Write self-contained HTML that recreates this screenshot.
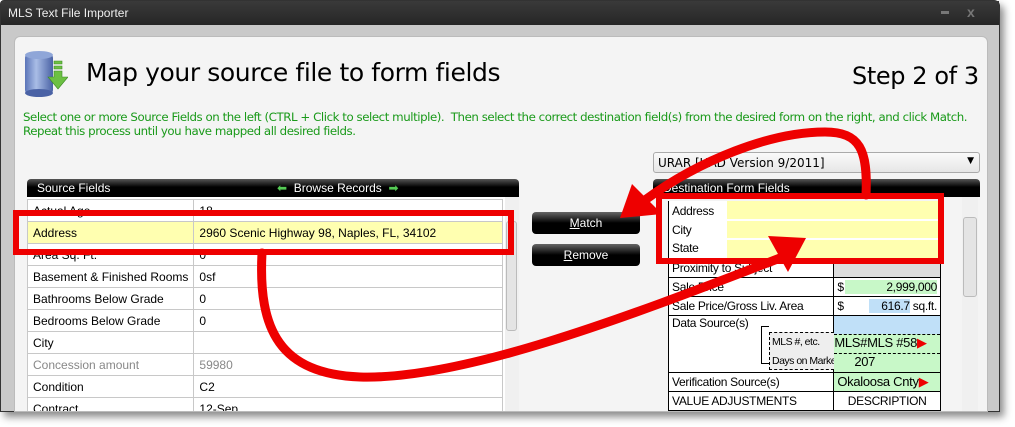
<!DOCTYPE html>
<html><head><meta charset="utf-8"><style>
*{margin:0;padding:0;box-sizing:border-box}
body{width:1015px;height:427px;background:#fff;position:relative;overflow:hidden;font-family:"Liberation Sans",sans-serif}
.win{position:absolute;left:0;top:0;width:1000px;height:412px;background:#c9c9c9;border:1px solid #333;box-shadow:4px 5px 8px rgba(0,0,0,.45);border-radius:4px 6px 0 0}
.title{position:absolute;left:0;top:0;width:998px;height:24px;background:linear-gradient(#3a3a3a,#262626);color:#eee;font-size:12px;padding:5px 7px}
.panel{position:absolute;left:13px;top:35px;width:974px;height:376px;background:#f4f4f4;border-radius:6px 6px 0 0;border:1px solid #bbb}
.abs{position:absolute}
.hdr{background:linear-gradient(#555,#000 45%);color:#fff;font-size:12px;height:18px;border-radius:4px 4px 0 0;padding:2px 10px}
table{border-collapse:collapse}
.src td{height:22px;border:1px solid #c8c8c8;font-size:12px;padding:0 5px;background:#fff;white-space:nowrap}
.btn{position:absolute;left:532px;width:108px;height:22px;border-radius:4px;background:linear-gradient(#666,#000 50%);color:#fff;font-size:12px;text-align:center;line-height:22px}
.f td{border:1px solid #000;height:19px;padding:0 3px;font-size:12px;white-space:nowrap;letter-spacing:-.3px}
</style></head><body>
<div class="win">
<div class="title">MLS Text File Importer</div>
<div class="abs" style="left:940px;top:10px;width:8px;height:3px;background:#777"></div>
<div class="abs" style="left:966px;top:3px;color:#777;font-size:14px;font-weight:bold">x</div>
<div class="panel"></div>
</div>
<svg class="abs" style="left:24px;top:50px" width="44" height="48"><defs><linearGradient id="g" x1="0" x2="1"><stop offset="0" stop-color="#5a74b8"/><stop offset=".4" stop-color="#a9bde6"/><stop offset="1" stop-color="#4a62a5"/></linearGradient></defs><rect x="1" y="4" width="28" height="40" rx="4" fill="url(#g)"/><ellipse cx="15" cy="5" rx="14" ry="4" fill="#8fa6d8"/><ellipse cx="15" cy="43" rx="14" ry="4" fill="#4a62a5"/><path d="M30 11h8v3h-8zM30 16h8v3h-8zM30 21h8v6h6l-10 12-10-12h6z" fill="#6cc043" stroke="#3c8a25" stroke-width=".6"/></svg>
<div class="abs" style="left:86px;top:58px;font-size:25px;color:#000;font-family:'DejaVu Sans',sans-serif;letter-spacing:-.4px">Map your source file to form fields</div>
<div class="abs" style="left:852px;top:62px;font-size:24px;font-family:'DejaVu Sans',sans-serif;letter-spacing:-.4px">Step 2 of 3</div>
<div class="abs" style="left:23px;top:110px;font-size:11.8px;color:#1a9a1a;line-height:14px;font-family:'DejaVu Sans',sans-serif;letter-spacing:-.45px;white-space:nowrap">Select one or more Source Fields on the left (CTRL + Click to select multiple).&nbsp; Then select the correct destination field(s) from the desired form on the right, and click Match.<br>Repeat this process until you have mapped all desired fields.</div>

<div class="abs hdr" style="left:27px;top:179px;width:492px">Source Fields<span style="position:absolute;left:250px;top:2px"><span style="color:#5c5">&#x2B05;</span>&nbsp; Browse Records &nbsp;<span style="color:#5c5">&#x27A1;</span></span></div>
<div class="abs" style="left:27px;top:197px;width:492px;height:214px;overflow:hidden;background:#fff">
<table class="src" style="width:476px;position:absolute;left:0;top:2px">
<tr><td style="width:163px">Actual Age</td><td>18</td></tr>
<tr><td style="background:#ffffb0">Address</td><td style="background:#ffffb0">2960 Scenic Highway 98, Naples, FL, 34102</td></tr>
<tr><td>Area Sq. Ft.</td><td>0</td></tr>
<tr><td>Basement &amp; Finished Rooms</td><td>0sf</td></tr>
<tr><td>Bathrooms Below Grade</td><td>0</td></tr>
<tr><td>Bedrooms Below Grade</td><td>0</td></tr>
<tr><td>City</td><td></td></tr>
<tr><td style="color:#888">Concession amount</td><td style="color:#888">59980</td></tr>
<tr><td>Condition</td><td>C2</td></tr>
<tr><td>Contract</td><td>12-Sep</td></tr>
</table>
<div class="abs" style="left:478px;top:0;width:14px;height:214px;background:#f0f0f0"></div>
<div class="abs" style="left:479px;top:24px;width:11px;height:110px;background:#e4e4e4;border:1px solid #bbb;border-radius:3px"></div>
</div>

<div class="btn" style="top:212px"><u>M</u>atch</div>
<div class="btn" style="top:244px"><u>R</u>emove</div>

<div class="abs" style="left:653px;top:152px;width:327px;height:21px;border:1px solid #aaa;border-radius:3px;background:linear-gradient(#fafafa,#e6e6e6);font-size:12px;padding:3px 4px;font-family:'DejaVu Sans',sans-serif">URAR [UAD Version 9/2011]<span style="position:absolute;right:5px;top:3px;font-size:9px">&#9660;</span></div>
<div class="abs hdr" style="left:653px;top:179px;width:327px">Destination Form Fields</div>
<div class="abs" style="left:653px;top:197px;width:327px;height:214px;background:#f4f4f4;overflow:hidden">
<div class="abs" style="left:309px;top:0;width:16px;height:214px;background:#f0f0f0"></div>
<div class="abs" style="left:310px;top:20px;width:14px;height:80px;background:#e4e4e4;border:1px solid #bbb;border-radius:3px"></div>
<table class="f abs" style="left:15px;top:4px;width:273px;background:#fff">
<tr><td style="border:none;border-left:1px solid #000;height:18px;width:58px">Address</td><td colspan="2" style="background:#ffffb0;border:none;border-bottom:2px solid #fff"></td></tr>
<tr><td style="border:none;border-left:1px solid #000;height:18px">City</td><td colspan="2" style="background:#ffffb0;border:none;border-bottom:2px solid #fff"></td></tr>
<tr><td style="border:none;border-left:1px solid #000;height:18px">State</td><td colspan="2" style="background:#ffffb0;border:none"></td></tr>
<tr><td colspan="2" style="width:164px">Proximity to Subject</td><td style="background:#ddd"></td></tr>
<tr><td colspan="2">Sale Price</td><td>$<span style="float:right;background:#c8f8c8;width:92px;text-align:right">2,999,000</span></td></tr>
<tr><td colspan="2">Sale Price/Gross Liv. Area</td><td>$<span style="float:right"><span style="background:#c0e0f8">&nbsp;&nbsp;&nbsp;&nbsp;616.7</span> sq.ft.</span></td></tr>
<tr><td colspan="2" style="height:57px;vertical-align:top;position:relative">Data Source(s)<div style="position:absolute;left:92px;top:10px;width:8px;height:38px;border:1px solid #000;border-right:none"></div><div style="position:absolute;left:100px;top:16px;width:65px;height:38px;border:1px dashed #000;border-right:none;background:#eee;font-size:10.5px;line-height:19px;padding-left:2px;letter-spacing:-.5px;overflow:hidden">MLS #, etc.<br>Days on Market</div></td><td style="padding:0;vertical-align:top"><div style="background:#c0e0f8;height:18px"></div><div style="background:#c8f8c8;height:19px;border-top:1px dashed #000;font-size:13px">MLS#MLS #58<span style="color:#e00">&#9654;</span></div><div style="background:#c8f8c8;height:19px;border-top:1px dashed #000;font-size:13px;padding-left:20px">207</div></td></tr>
<tr><td colspan="2">Verification Source(s)</td><td style="background:#c8f8c8;font-size:13px">Okaloosa Cnty<span style="color:#e00">&#9654;</span></td></tr>
<tr><td colspan="2">VALUE ADJUSTMENTS</td><td style="text-align:center">DESCRIPTION</td></tr>
</table>
</div>

<svg class="abs" style="left:0;top:0" width="1015" height="427">
<g fill="none" stroke="#e00" stroke-width="6">
<rect x="16" y="213" width="495" height="39" />
<rect x="659" y="196" width="282" height="65" />
</g>
<g fill="none" stroke="#e00" stroke-width="9" stroke-linecap="round">
<path d="M866 195 C868 150 860 132 825 132 C770 132 700 160 645 200"/>
<path d="M262 253 C258 330 280 374 360 377 C460 380 620 320 780 258"/>
</g>
<path d="M620 218 L632 184 L662 214 Z" fill="#e00"/>
<path d="M806 238 L768 236 L788 272 Z" fill="#e00"/>
</svg>
</body></html>
